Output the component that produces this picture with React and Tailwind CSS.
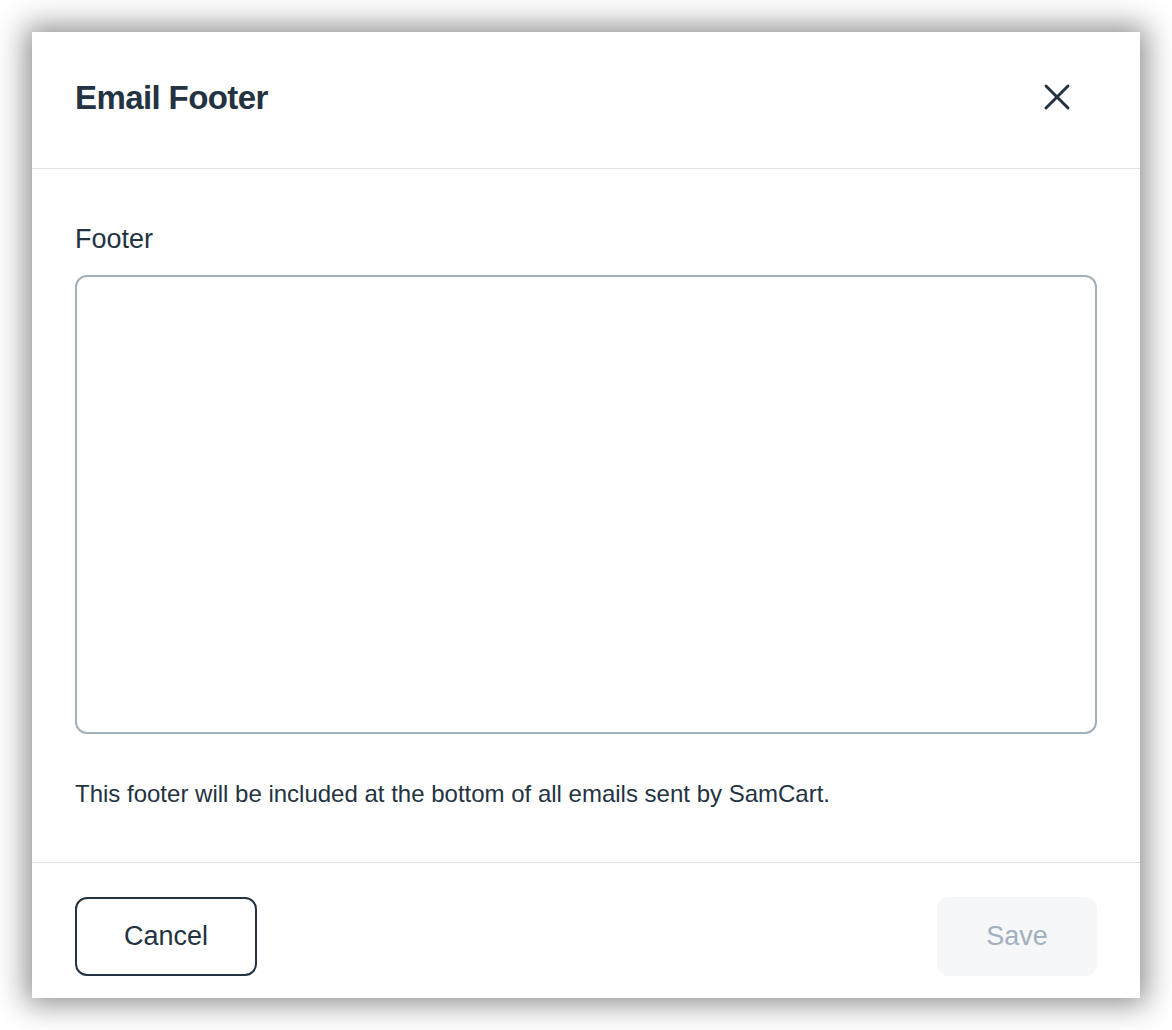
import { X } from 'lucide-react'

export default function App() {
  return (
    <div className="min-h-[1030px] bg-white pt-[32px] px-[32px] font-['Liberation_Sans',Arial,sans-serif] text-[#243342]">
      <div className="w-[1108px] h-[966px] bg-white shadow-[0_0_28px_6px_rgba(0,0,0,0.45)] flex flex-col">
        <div className="h-[137px] flex items-center justify-between pl-[43px] pr-[61px] border-b border-[#dde2e6] shrink-0">
          <h2 className="text-[33px] font-bold tracking-[-0.6px] leading-none mb-[6px]">Email Footer</h2>
          <button className="text-[#243342] mb-[6px]">
            <X size={44} strokeWidth={1.6} />
          </button>
        </div>

        <div className="px-[43px] pt-[54px] pb-[53px] border-b border-[#dde2e6] shrink-0">
          <label className="block text-[27px] leading-[32px] mb-[20px]">Footer</label>
          <textarea className="block w-full h-[459px] rounded-[12px] border-[2px] border-[#a3afba] resize-none outline-none p-4"></textarea>
          <p className="mt-[45px] text-[24px] leading-[30px]">
            This footer will be included at the bottom of all emails sent by SamCart.
          </p>
        </div>

        <div className="flex items-start justify-between px-[43px] pt-[34px]">
          <button className="w-[182px] h-[79px] rounded-[12px] border-[2px] border-[#243342] text-[27px]">Cancel</button>
          <button className="w-[160px] h-[79px] rounded-[12px] bg-[#f5f7f9] text-[#a3b0bd] text-[27px]">Save</button>
        </div>
      </div>
    </div>
  )
}
